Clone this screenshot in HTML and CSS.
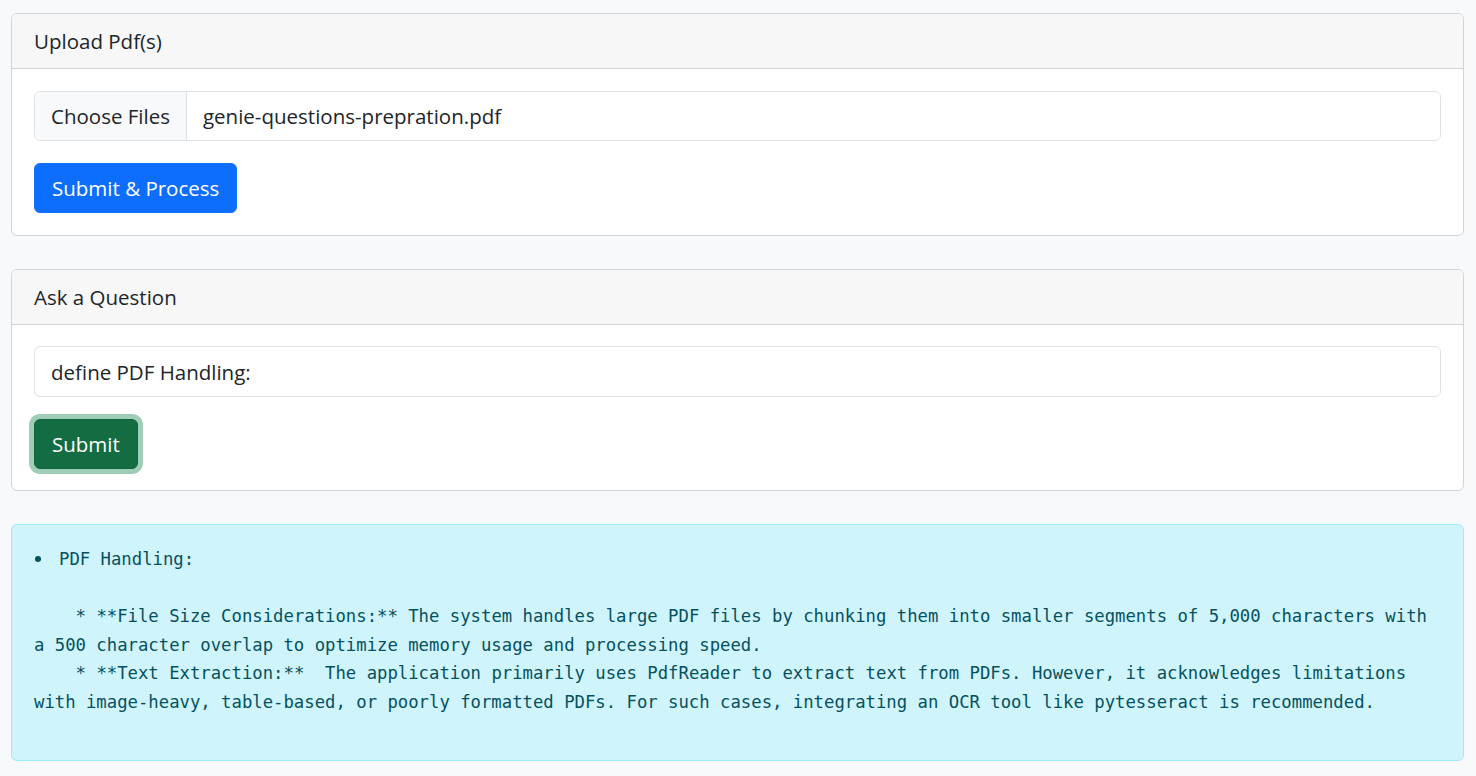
FILE: index.html
```html
<!DOCTYPE html>
<html lang="en">
<head>
<meta charset="utf-8">
<title>PDF Q&amp;A</title>
<link rel="stylesheet" href="styles.css">
</head>
<body>
<main class="page">
  <section class="card">
    <div class="card-header">Upload Pdf(s)</div>
    <div class="card-body">
      <div class="file-input">
        <span class="file-btn">Choose Files</span>
        <span class="file-name">genie-questions-prepration.pdf</span>
      </div>
      <button class="btn btn-primary" type="button">Submit &amp; Process</button>
    </div>
  </section>

  <section class="card card-ask">
    <div class="card-header">Ask a Question</div>
    <div class="card-body">
      <input class="text-input" type="text" value="define PDF Handling:">
      <button class="btn btn-success" type="button">Submit</button>
    </div>
  </section>

  <section class="alert">
    <div class="answer-head"><span class="bullet"></span><span class="answer-title">PDF Handling:</span></div>
<pre class="answer">
    * **File Size Considerations:** The system handles large PDF files by chunking them into smaller segments of 5,000 characters with a 500 character overlap to optimize memory usage and processing speed.
    * **Text Extraction:**  The application primarily uses PdfReader to extract text from PDFs. However, it acknowledges limitations with image-heavy, table-based, or poorly formatted PDFs. For such cases, integrating an OCR tool like pytesseract is recommended.</pre>
  </section>
</main>
</body>
</html>
```

FILE: styles.css
```css
* { box-sizing: border-box; }

html, body {
  margin: 0;
  padding: 0;
  background: #f8f9fa;
}

body {
  font-family: "Open Sans", "Noto Sans", sans-serif;
  font-size: 20.5px;
  color: #212529;
}

.page {
  padding: 13px 12px 0 11px;
  display: flex;
  flex-direction: column;
  gap: 33px;
}

.card {
  background: #fff;
  border: 1px solid #d3d4d5;
  border-radius: 6px;
  overflow: hidden;
}

.card-header {
  background: #f7f7f7;
  border-bottom: 1px solid #d3d4d5;
  height: 55px;
  padding: 0 22px;
  display: flex;
  align-items: center;
  line-height: 33px;
}

.card-body {
  padding: 22px;
  display: flex;
  flex-direction: column;
  align-items: flex-start;
  gap: 22px;
}

.card-ask .card-body {
  padding: 21px 22px 21px;
}

.file-input {
  width: 100%;
  height: 50px;
  border: 1px solid #dee2e6;
  border-radius: 6px;
  display: flex;
  align-items: stretch;
  overflow: hidden;
}

.file-btn {
  background: #f8f9fa;
  border-right: 1px solid #dee2e6;
  padding: 0 16px;
  display: flex;
  align-items: center;
}

.file-name {
  padding: 0 16px;
  display: flex;
  align-items: center;
}

.text-input {
  width: 100%;
  height: 51px;
  border: 1px solid #dee2e6;
  border-radius: 6px;
  padding: 0 16px;
  font: inherit;
  color: #212529;
  background: #fff;
  outline: none;
}

.btn {
  font: inherit;
  height: 50px;
  padding: 0 17px;
  border-radius: 6px;
  border: 1px solid transparent;
  color: #fff;
  cursor: pointer;
}

.btn-primary {
  background: #0d6efd;
  border-color: #0d6efd;
}

.btn-success {
  background: #146c43;
  border-color: #13653f;
  box-shadow: 0 0 0 5px #9fcdb7;
}

.alert {
  background: #cff4fc;
  border: 1px solid #9eeaf9;
  border-radius: 6px;
  padding: 20px 22px 22px 22px;
  color: #055160;
  font-family: "DejaVu Sans Mono", "Liberation Mono", monospace;
  font-size: 17.27px;
  line-height: 28.5px;
}

.answer-head {
  display: flex;
  align-items: center;
  height: 28.5px;
}

.bullet {
  width: 6px;
  height: 6px;
  border-radius: 50%;
  background: #055160;
  margin: 0 18px 0 1px;
}

.answer {
  margin: 28.5px 0 22px 0;
  font: inherit;
  white-space: pre-wrap;
}
```
